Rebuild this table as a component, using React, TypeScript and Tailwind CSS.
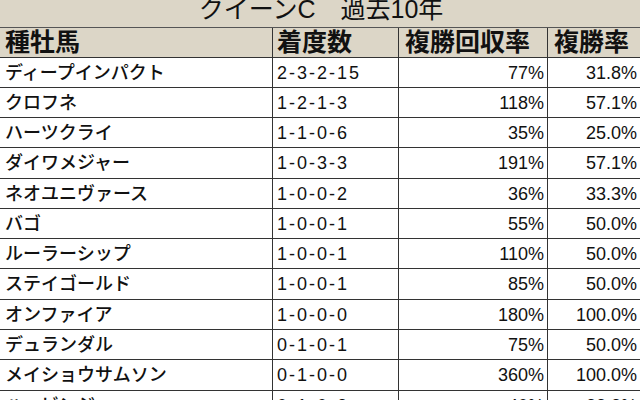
const rows = [
  ["ディープインパクト", "2-3-2-15", "77%", "31.8%"],
  ["クロフネ", "1-2-1-3", "118%", "57.1%"],
  ["ハーツクライ", "1-1-0-6", "35%", "25.0%"],
  ["ダイワメジャー", "1-0-3-3", "191%", "57.1%"],
  ["ネオユニヴァース", "1-0-0-2", "36%", "33.3%"],
  ["バゴ", "1-0-0-1", "55%", "50.0%"],
  ["ルーラーシップ", "1-0-0-1", "110%", "50.0%"],
  ["ステイゴールド", "1-0-0-1", "85%", "50.0%"],
  ["オンファイア", "1-0-0-0", "180%", "100.0%"],
  ["デュランダル", "0-1-0-1", "75%", "50.0%"],
  ["メイショウサムソン", "0-1-0-0", "360%", "100.0%"],
  ["ハービンジャー", "0-1-0-2", "40%", "33.3%"],
];

const font = { fontFamily: '"Liberation Sans", "Noto Sans CJK JP", sans-serif' };

// rows are a hair over 30px in the source image
const tall = [3, 7, 10];

export default function App() {
  return (
    <div className="w-[640px] h-[400px] overflow-hidden bg-white text-[#111]" style={font}>
      {/* title */}
      <div className="h-[28px] bg-[#dcd6c7] border-b border-[#555] flex items-end justify-center pb-[5px]">
        <span className="text-[25px] leading-none pl-[2px]">クイーンC　過去10年</span>
      </div>

      {/* header */}
      <div className="grid grid-cols-[273px_126px_149px_1fr] h-[30px] bg-[#dcd6c7] border-b border-[#333] text-[25px] leading-none font-bold">
        <div className="border-r border-[#333] flex items-center pl-[5px]">種牡馬</div>
        <div className="border-r border-[#333] flex items-center pl-[4px]">着度数</div>
        <div className="border-r border-[#333] flex items-center pl-[6px]">複勝回収率</div>
        <div className="flex items-center pl-[6px]">複勝率</div>
      </div>

      {rows.map((r, i) => (
        <div
          key={r[0]}
          className={
            "grid grid-cols-[273px_126px_149px_1fr] border-b border-[#333] text-[18px] leading-none font-medium " +
            (tall.includes(i) ? "h-[31px]" : "h-[30px]")
          }
        >
          <div className="border-r border-[#333] flex items-center pl-[5px]">{r[0]}</div>
          <div className="border-r border-[#333] flex items-center pl-[4px] tracking-[2px]">{r[1]}</div>
          <div className="border-r border-[#333] flex items-center justify-end pr-[3px]">{r[2]}</div>
          <div className="flex items-center justify-end pr-[3px]">{r[3]}</div>
        </div>
      ))}
    </div>
  );
}
